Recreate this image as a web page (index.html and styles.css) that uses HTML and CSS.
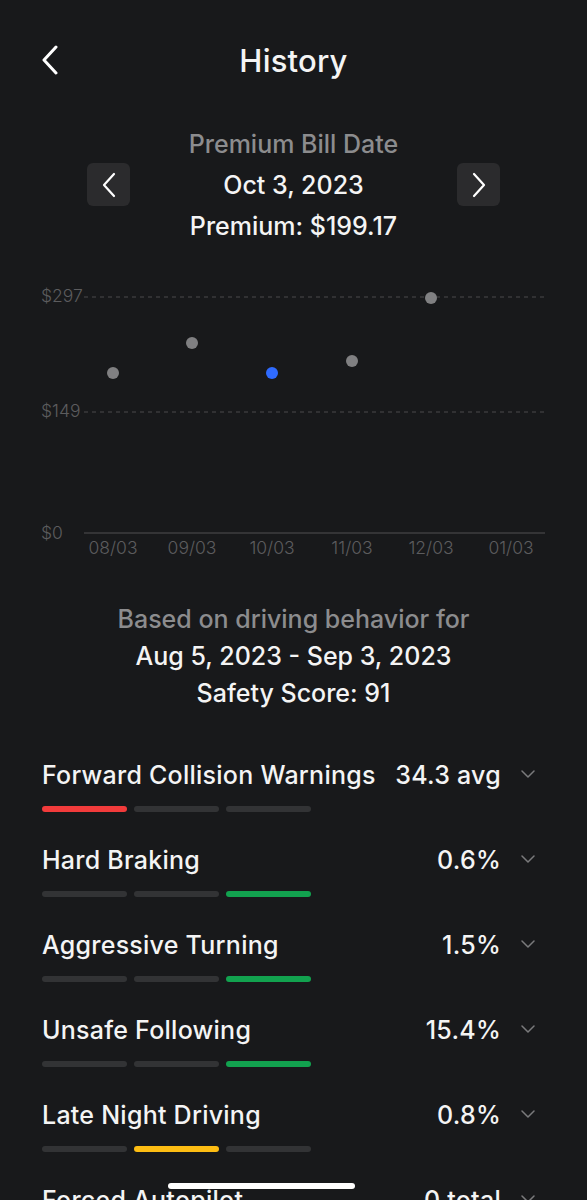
FILE: index.html
```html
<!DOCTYPE html>
<html lang="en">
<head>
    <meta charset="UTF-8">
    <meta name="viewport" content="width=device-width, initial-scale=1.0">
    <title>History</title>
    <link rel="stylesheet" href="styles.css">
</head>
<body>
    <div class="screen">
        <header class="topbar">
            <button class="back-btn" aria-label="Back">
                <svg width="18" height="30" viewBox="0 0 18 30"><path d="M15 2 L3 15 L15 28" fill="none" stroke="#fff" stroke-width="3" stroke-linecap="round" stroke-linejoin="round"/></svg>
            </button>
            <h1 class="title">History</h1>
        </header>

        <!-- Bill date picker -->
        <section class="bill">
            <div class="bill-label">Premium Bill Date</div>
            <div class="bill-nav">
                <button class="nav-btn" aria-label="Previous">
                    <svg width="14" height="26" viewBox="0 0 14 26"><path d="M12 2 L2 13 L12 24" fill="none" stroke="#fff" stroke-width="2.2" stroke-linecap="round" stroke-linejoin="round"/></svg>
                </button>
                <div class="bill-date">Oct 3, 2023</div>
                <button class="nav-btn" aria-label="Next">
                    <svg width="14" height="26" viewBox="0 0 14 26"><path d="M2 2 L12 13 L2 24" fill="none" stroke="#fff" stroke-width="2.2" stroke-linecap="round" stroke-linejoin="round"/></svg>
                </button>
            </div>
            <div class="bill-amount">Premium: $199.17</div>
        </section>

        <!-- Premium chart -->
        <svg class="chart" width="587" height="300" viewBox="0 270 587 300">
            <g class="axis-label">
                <text x="41" y="302">$297</text>
                <text x="41" y="417">$149</text>
                <text x="41" y="539">$0</text>
            </g>
            <line x1="84" y1="297" x2="547" y2="297" class="grid"/>
            <line x1="84" y1="412" x2="547" y2="412" class="grid"/>
            <line x1="84" y1="533" x2="545" y2="533" class="baseline"/>
            <g class="axis-label" text-anchor="middle">
                <text x="113" y="554">08/03</text>
                <text x="192" y="554">09/03</text>
                <text x="272" y="554">10/03</text>
                <text x="352" y="554">11/03</text>
                <text x="431" y="554">12/03</text>
                <text x="511" y="554">01/03</text>
            </g>
            <circle cx="113" cy="373" r="6" class="dot"/>
            <circle cx="192" cy="343" r="6" class="dot"/>
            <circle cx="272" cy="373" r="6" class="dot dot-active"/>
            <circle cx="352" cy="361" r="6" class="dot"/>
            <circle cx="431" cy="298" r="6" class="dot"/>
        </svg>

        <section class="basis">
            <div class="basis-label">Based on driving behavior for</div>
            <div>Aug 5, 2023 - Sep 3, 2023</div>
            <div>Safety Score: 91</div>
        </section>

        <ul class="metrics">
            <li class="metric">
                <div class="metric-head">
                    <span class="metric-name">Forward Collision Warnings</span>
                    <span class="metric-value">34.3 avg</span>
                    <svg class="chev" width="14" height="8" viewBox="0 0 14 8"><path d="M1 1 L7 7 L13 1" fill="none" stroke="#7a7a7c" stroke-width="1.5" stroke-linecap="round" stroke-linejoin="round"/></svg>
                </div>
                <div class="meter"><span class="bar red"></span><span class="bar"></span><span class="bar"></span></div>
            </li>
            <li class="metric">
                <div class="metric-head">
                    <span class="metric-name">Hard Braking</span>
                    <span class="metric-value">0.6%</span>
                    <svg class="chev" width="14" height="8" viewBox="0 0 14 8"><path d="M1 1 L7 7 L13 1" fill="none" stroke="#7a7a7c" stroke-width="1.5" stroke-linecap="round" stroke-linejoin="round"/></svg>
                </div>
                <div class="meter"><span class="bar"></span><span class="bar"></span><span class="bar green"></span></div>
            </li>
            <li class="metric">
                <div class="metric-head">
                    <span class="metric-name">Aggressive Turning</span>
                    <span class="metric-value">1.5%</span>
                    <svg class="chev" width="14" height="8" viewBox="0 0 14 8"><path d="M1 1 L7 7 L13 1" fill="none" stroke="#7a7a7c" stroke-width="1.5" stroke-linecap="round" stroke-linejoin="round"/></svg>
                </div>
                <div class="meter"><span class="bar"></span><span class="bar"></span><span class="bar green"></span></div>
            </li>
            <li class="metric">
                <div class="metric-head">
                    <span class="metric-name">Unsafe Following</span>
                    <span class="metric-value">15.4%</span>
                    <svg class="chev" width="14" height="8" viewBox="0 0 14 8"><path d="M1 1 L7 7 L13 1" fill="none" stroke="#7a7a7c" stroke-width="1.5" stroke-linecap="round" stroke-linejoin="round"/></svg>
                </div>
                <div class="meter"><span class="bar"></span><span class="bar"></span><span class="bar green"></span></div>
            </li>
            <li class="metric">
                <div class="metric-head">
                    <span class="metric-name">Late Night Driving</span>
                    <span class="metric-value">0.8%</span>
                    <svg class="chev" width="14" height="8" viewBox="0 0 14 8"><path d="M1 1 L7 7 L13 1" fill="none" stroke="#7a7a7c" stroke-width="1.5" stroke-linecap="round" stroke-linejoin="round"/></svg>
                </div>
                <div class="meter"><span class="bar"></span><span class="bar yellow"></span><span class="bar"></span></div>
            </li>
            <li class="metric">
                <div class="metric-head">
                    <span class="metric-name">Forced Autopilot</span>
                    <span class="metric-value">0 total</span>
                    <svg class="chev" width="14" height="8" viewBox="0 0 14 8"><path d="M1 1 L7 7 L13 1" fill="none" stroke="#7a7a7c" stroke-width="1.5" stroke-linecap="round" stroke-linejoin="round"/></svg>
                </div>
            </li>
        </ul>

        <div class="home-indicator"></div>
    </div>
</body>
</html>
```

FILE: styles.css
```css
html, body {
    margin: 0;
    padding: 0;
    background: #18191b;
}

body {
    font-family: Inter, "Noto Sans", sans-serif;
    color: #f4f4f4;
    overflow: hidden;
}

.screen {
    position: relative;
    width: 587px;
    height: 1200px;
    overflow: hidden;
    background: #18191b;
}

button {
    border: none;
    padding: 0;
    background: none;
    cursor: pointer;
}

/* header */
.topbar {
    position: relative;
    height: 120px;
    display: flex;
    align-items: center;
    justify-content: center;
}

.back-btn {
    position: absolute;
    left: 41px;
    top: 45px;
    display: flex;
}

.title {
    margin: 0;
    font-size: 31px;
    font-weight: 500;
    letter-spacing: 0.2px;
}

/* bill date */
.bill {
    padding-top: 5px;
    text-align: center;
    font-size: 25px;
    font-weight: 500;
}

.bill-label {
    line-height: 38px;
    color: #8c8c8e;
}

.bill-nav {
    display: grid;
    grid-template-columns: 43px 1fr 43px;
    align-items: center;
    width: 413px;
    margin: 0 auto;
    height: 43px;
}

.nav-btn {
    width: 43px;
    height: 43px;
    border-radius: 6px;
    background: #2b2b2d;
    display: flex;
    align-items: center;
    justify-content: center;
}

.bill-amount {
    line-height: 40px;
}

/* chart */
.chart {
    display: block;
    margin-top: 24px;
}

.axis-label {
    font-family: Inter, "Noto Sans", sans-serif;
    font-size: 17.5px;
    font-weight: 300;
    fill: #5c5c5e;
}

.grid {
    stroke: #4a4a4c;
    stroke-width: 1;
    stroke-dasharray: 4 4;
}

.baseline {
    stroke: #505052;
    stroke-width: 1.2;
}

.dot {
    fill: #808082;
}

.dot-active {
    fill: #2f6bff;
}

/* basis */
.basis {
    margin-top: 31px;
    text-align: center;
    font-size: 25px;
    font-weight: 500;
    line-height: 37px;
}

.basis-label {
    color: #8c8c8e;
}

/* metrics */
.metrics {
    list-style: none;
    margin: 48px 0 0;
    padding: 0 52px 0 42px;
}

.metric {
    height: 85px;
}

.metric-head {
    display: flex;
    align-items: center;
    height: 30px;
    font-size: 25px;
    font-weight: 500;
    letter-spacing: 0.25px;
}

.metric-name {
    flex: 1;
}

.metric-value {
    margin-right: 20px;
}

.chev {
    display: block;
    margin-top: -2px;
}

.meter {
    display: flex;
    gap: 7px;
    margin-top: 16px;
}

.bar {
    width: 85px;
    height: 6px;
    border-radius: 3px;
    background: #323335;
}

.bar.red { background: #f23b3b; }
.bar.green { background: #12a24f; }
.bar.yellow { background: #fdbd13; }

.home-indicator {
    position: absolute;
    left: 168px;
    bottom: 11px;
    width: 187px;
    height: 6px;
    border-radius: 3px;
    background: #ffffff;
}
```
